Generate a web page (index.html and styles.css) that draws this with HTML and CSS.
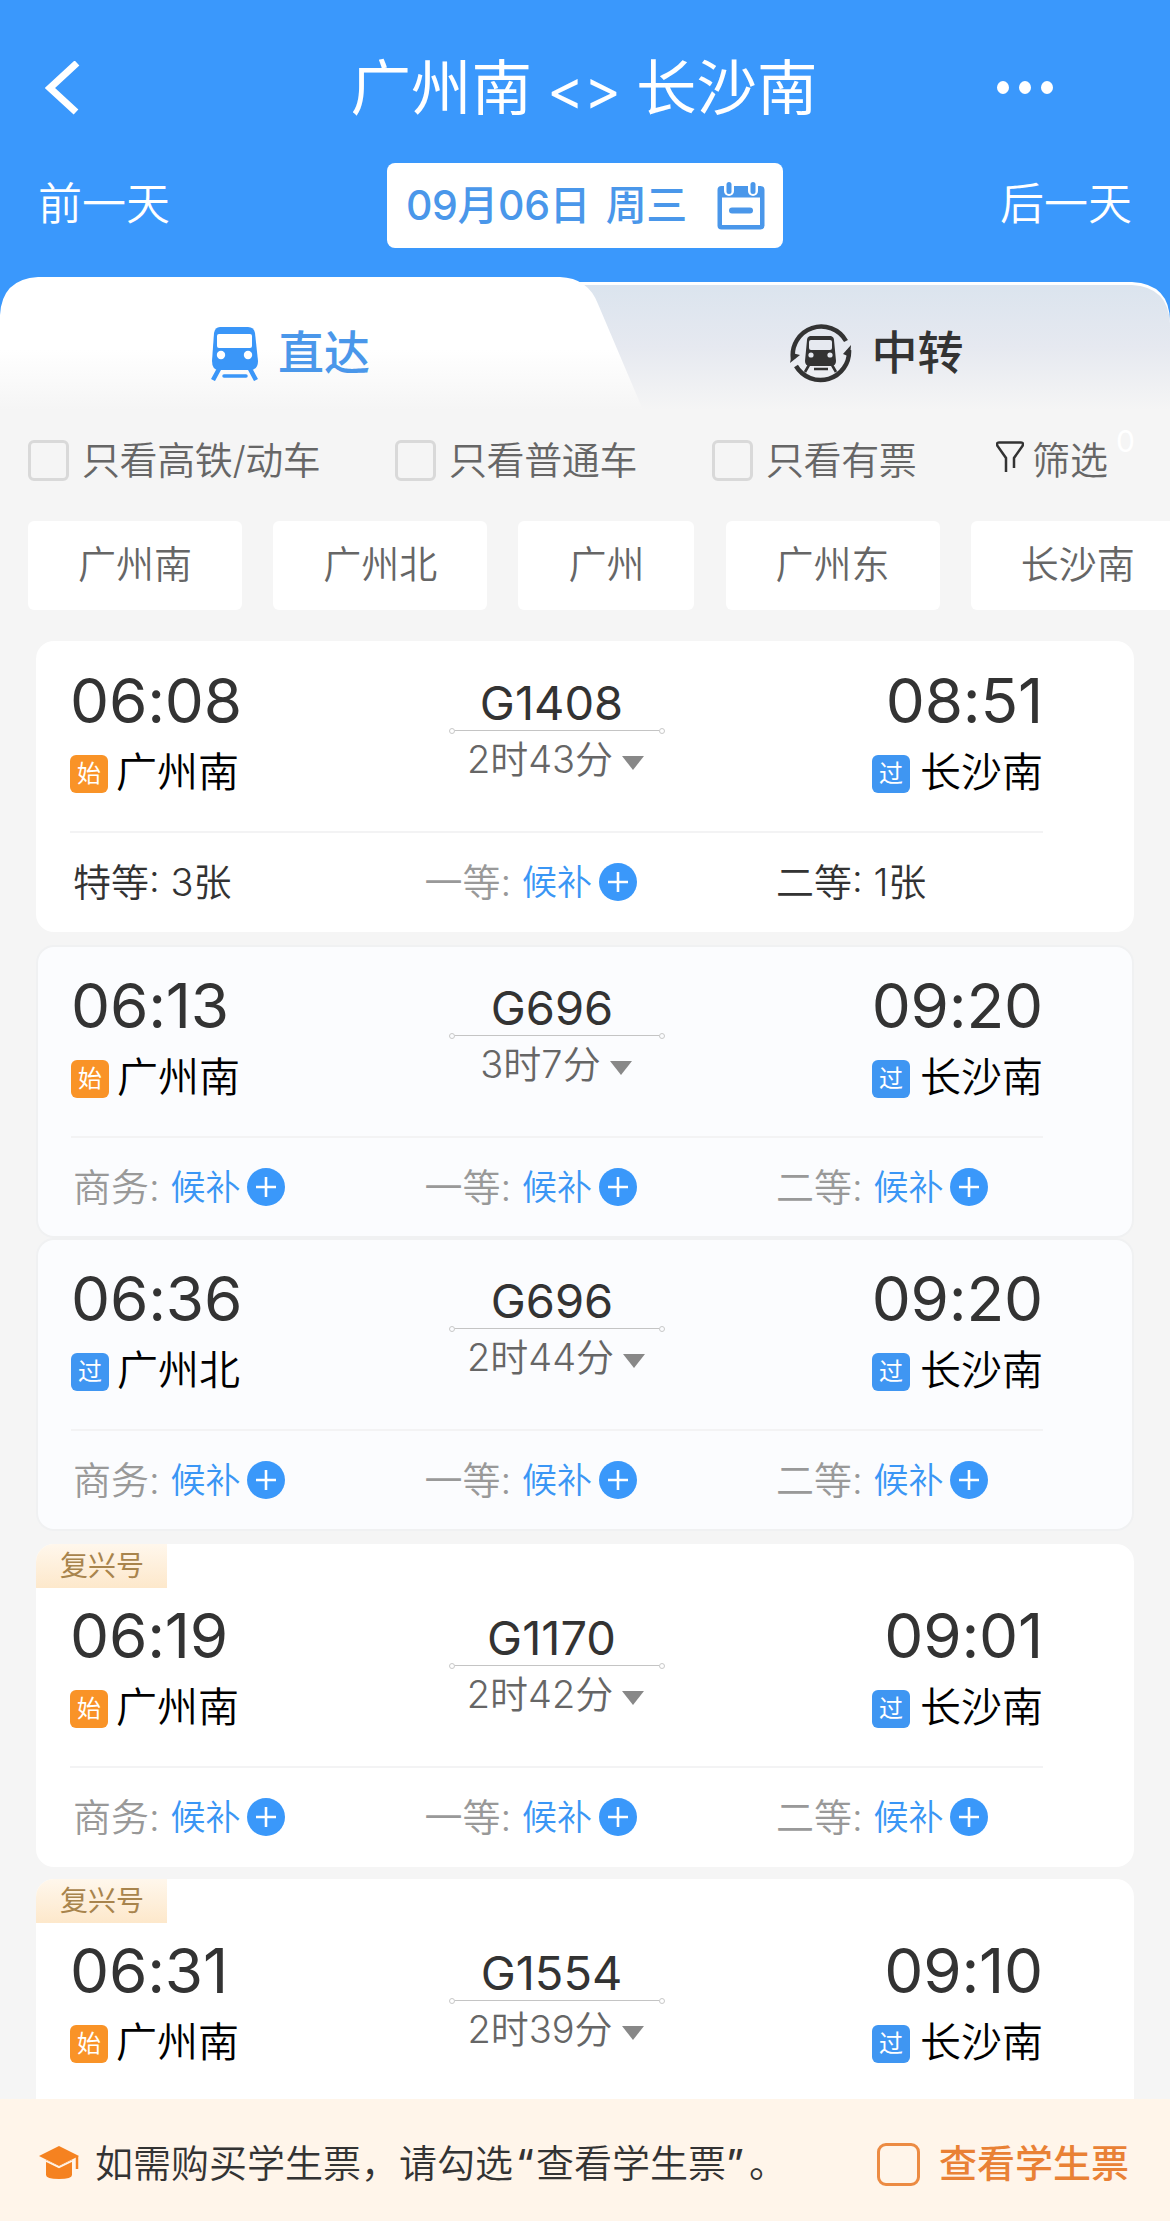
FILE: index.html
```html
<!DOCTYPE html>
<html lang="zh-CN">
<head>
    <meta charset="UTF-8">
    <meta name="viewport" content="width=device-width, initial-scale=1.0">
    <title>广州南 - 长沙南</title>
    <link rel="stylesheet" href="styles.css">
</head>
<body>
    <header class="header">
        <div class="title-bar">
            <svg class="back" viewBox="0 0 36 54"><path d="M32 2L5 27L31 51" fill="none" stroke="#fff" stroke-width="7"/></svg>
            <h1>广州南<span class="swap">&lt;&gt;</span>长沙南</h1>
            <div class="more"><i></i><i></i><i></i></div>
        </div>
        <div class="date-bar">
            <span class="day">前一天</span>
            <div class="date">
                <span class="date-text">09月06日 周三</span>
                <svg class="calendar" viewBox="0 0 48 48">
                    <rect x="0.5" y="4" width="47" height="43.5" rx="4" fill="#4a97ea"/>
                    <rect x="5" y="15.500" width="38" height="27.500" fill="#fff"/>
                    <rect x="7" y="-3" width="10" height="17" rx="5" fill="#fff"/>
                    <rect x="31" y="-3" width="10" height="17" rx="5" fill="#fff"/>
                    <rect x="9.500" y="0" width="5" height="12" rx="2.500" fill="#4a97ea"/>
                    <rect x="33.500" y="0" width="5" height="12" rx="2.500" fill="#4a97ea"/>
                    <rect x="12" y="25.500" width="24" height="6" rx="3" fill="#4a97ea"/>
                </svg>
            </div>
            <span class="day">后一天</span>
        </div>
    </header>

    <nav class="tabs">
        <svg class="tabs-bg" viewBox="0 0 1170 133">
            <defs>
                <linearGradient id="tabOn" x1="0" y1="0" x2="0" y2="1">
                    <stop offset="0.55" stop-color="#fff"/>
                    <stop offset="1" stop-color="#f5f5f5"/>
                </linearGradient>
                <linearGradient id="tabOff" x1="0" y1="0" x2="0" y2="1">
                    <stop offset="0" stop-color="#dbe4ee"/>
                    <stop offset="0.5" stop-color="#e6e9f0"/>
                    <stop offset="1" stop-color="#f5f5f5"/>
                </linearGradient>
            </defs>
            <path d="M500 5H1132Q1170 7 1170 45V133H500Z" fill="#fff"/>
            <path d="M500 8H1132Q1168 10 1170 46V133H500Z" fill="url(#tabOff)"/>
            <path d="M0 133V38Q2 2 38 0H560Q588 1 598 27L643 133Z" fill="url(#tabOn)"/>
        </svg>
        <div class="tab active">
            <svg class="train" viewBox="0 0 48 54">
                <path d="M9 0H37Q43 0 44 6L47 34Q47 43 39 43H8Q1 43 1 34L3 6Q4 0 9 0Z" fill="#3a96f8"/>
                <rect x="6" y="7" width="35" height="14" rx="2" fill="#fff"/>
                <circle cx="10" cy="28" r="4.200" fill="#fff"/>
                <circle cx="37" cy="28" r="4.200" fill="#fff"/>
                <path d="M8 42L2 53M39 42L45 53" stroke="#3a96f8" stroke-width="4.500"/>
                <path d="M13 49H35" stroke="#3a96f8" stroke-width="3.500" stroke-linecap="round"/>
            </svg>
            <span>直达</span>
        </div>
        <div class="tab">
            <svg class="transfer" viewBox="0 0 62 62">
                <path d="M3 36A28.500 28.500 0 0 1 56 18M59 27A28.500 28.500 0 0 1 6 43" fill="none" stroke="#333" stroke-width="4.500"/>
                <path d="M0 40L2 30L10 32Z M53 31L61 22L60 34Z" fill="#333"/>
                <path d="M20 13H41Q44 14 44 17L46 38Q46 43 41 43H20Q15 43 15 38L17 17Q17 14 20 13Z" fill="#333"/>
                <rect x="19" y="17" width="23" height="10" rx="2" fill="#e6e9f0"/>
                <circle cx="21" cy="32" r="2.600" fill="#e6e9f0"/>
                <circle cx="40" cy="32" r="2.600" fill="#e6e9f0"/>
                <path d="M19 42L15 49M42 42L46 49M24 46H38" stroke="#333" stroke-width="2.600"/>
            </svg>
            <span>中转</span>
        </div>
    </nav>

    <div class="filters">
        <label class="check"><i></i>只看高铁/动车</label>
        <label class="check"><i></i>只看普通车</label>
        <label class="check"><i></i>只看有票</label>
        <div class="more-filter">
            <svg class="funnel" viewBox="0 0 28 32"><path d="M10 31V17L1.500 5Q0 1.500 3 1.500H25Q28 1.500 26.500 5L18 17V27" fill="none" stroke="#333" stroke-width="2.500"/></svg>
            <span>筛选</span>
            <sup>0</sup>
        </div>
    </div>

    <div class="stations">
        <span>广州南</span>
        <span>广州北</span>
        <span>广州</span>
        <span>广州东</span>
        <span>长沙南</span>
    </div>

    <main class="list" id="list"></main>

    <footer class="student">
        <svg class="cap" viewBox="0 0 40 34">
            <path d="M7 14V29Q7 33 20 33Q33 33 33 29V14L20 21Z" fill="#f58220"/>
            <path d="M20 0L40 10L20 20L0 10Z" fill="#f58220"/>
            <path d="M7 15L20 21.500L33 15" fill="none" stroke="#fff5ea" stroke-width="1.500"/>
            <path d="M38 10V23" stroke="#f58220" stroke-width="2.500"/>
        </svg>
        <span class="tip">如需购买学生票，请勾选<q>查看学生票</q>。</span>
        <i class="student-box"></i>
        <span class="student-link">查看学生票</span>
    </footer>

    <script>
        const trains = [
            { no: 'G1408', dep: '06:08', arr: '08:51', from: '广州南', start: true, time: '2时43分', seats: [['特等', '3张'], ['一等', ''], ['二等', '1张']] },
            { no: 'G696', dep: '06:13', arr: '09:20', from: '广州南', start: true, time: '3时7分', seats: [['商务', ''], ['一等', ''], ['二等', '']], type: 'soldout' },
            { no: 'G696', dep: '06:36', arr: '09:20', from: '广州北', start: false, time: '2时44分', seats: [['商务', ''], ['一等', ''], ['二等', '']], type: 'soldout joined' },
            { no: 'G1170', dep: '06:19', arr: '09:01', from: '广州南', start: true, time: '2时42分', seats: [['商务', ''], ['一等', ''], ['二等', '']], tag: '复兴号' },
            { no: 'G1554', dep: '06:31', arr: '09:10', from: '广州南', start: true, time: '2时39分', seats: [], tag: '复兴号' }
        ];

        // no count means the class is sold out and only the waitlist is open
        function seat([name, count]) {
            if (count) {
                return `<div class="seat">${name}: ${count}</div>`;
            }
            return `<div class="seat none">${name}: <b>候补</b><svg class="plus" viewBox="0 0 38 38"><circle cx="19" cy="19" r="19" fill="#3a98fa"/><path d="M9 19H29M19 9V29" stroke="#fff" stroke-width="2.600"/></svg></div>`;
        }

        document.getElementById('list').innerHTML = trains.map(t => `
            <section class="card ${t.type || ''} ${t.tag ? 'tagged' : ''}">
                ${t.tag ? `<span class="tag">${t.tag}</span>` : ''}
                <div class="trip">
                    <div class="stop">
                        <div class="clock">${t.dep}</div>
                        <div class="place"><i class="${t.start ? 'start' : 'pass'}">${t.start ? '始' : '过'}</i>${t.from}</div>
                    </div>
                    <div class="train-info">
                        <div class="train-no">${t.no}</div>
                        <div class="line"><i></i><hr><i></i></div>
                        <div class="duration">${t.time}<i></i></div>
                    </div>
                    <div class="stop end">
                        <div class="clock">${t.arr}</div>
                        <div class="place"><i class="pass">过</i>长沙南</div>
                    </div>
                </div>
                <div class="seats">${t.seats.map(seat).join('')}</div>
            </section>`).join('');
    </script>
</body>
</html>
```
FILE: styles.css
```css
* {
    box-sizing: border-box;
}
body {
    margin: 0;
    width: 1170px;
    height: 2221px;
    overflow: hidden;
    display: flex;
    flex-direction: column;
    background-color: #f5f5f5;
    font-family: Inter, "Noto Sans CJK SC", sans-serif;
    color: #333;
}
i {
    font-style: normal;
}
svg {
    display: block;
    flex: none;
}
.header {
    height: 277px;
    flex: none;
    background-color: #3a98fc;
    color: #fff;
}
.title-bar {
    display: flex;
    align-items: center;
    justify-content: space-between;
    height: 163px;
    padding: 12px 117px 0 45px;
}
.back {
    width: 36px;
    height: 54px;
}
h1 {
    margin: 3px 0 0 90px;
    font-size: 60.500px;
    font-weight: 400;
    line-height: 80px;
    white-space: nowrap;
}
.swap {
    margin: 0 15px;
    font-size: 56px;
}
.more {
    display: flex;
    gap: 10px;
}
.more i {
    width: 12px;
    height: 13px;
    border-radius: 50%;
    background-color: #fff;
}
.date-bar {
    display: flex;
    align-items: center;
    justify-content: space-between;
    height: 85px;
    padding: 0 38px 0 38px;
}
.day {
    padding-bottom: 3px;
    font-size: 44px;
    font-weight: 350;
    line-height: 60px;
}
.date {
    display: flex;
    align-items: center;
    justify-content: space-between;
    width: 396px;
    height: 85px;
    padding: 0 18px 0 19px;
    border-radius: 8px;
    background-color: #fff;
    color: #4a97ea;
    font-size: 41px;
    font-weight: 500;
    white-space: nowrap;
}
.date-text {
    padding-bottom: 7px;
    letter-spacing: -0.4px;
    word-spacing: 5px;
}
.calendar {
    width: 48px;
    height: 48px;
}
.tabs {
    position: relative;
    display: flex;
    flex: none;
    height: 133px;
    background: linear-gradient(#3a98fc 50%, #f5f5f5 50%);
}
.tabs-bg {
    position: absolute;
    left: 0;
    top: 0;
    width: 1170px;
    height: 133px;
}
.tab {
    position: relative;
    display: flex;
    align-items: center;
    justify-content: center;
    width: 585px;
    height: 150px;
    padding-right: 2px;
    font-size: 46px;
    font-weight: 500;
    gap: 20px;
}
.tab span {
    padding-bottom: 6px;
}
.tab.active {
    padding-right: 4px;
    color: #4a97ea;
    gap: 19px;
}
.train {
    width: 48px;
    height: 54px;
    margin-top: 4px;
}
.transfer {
    width: 62px;
    height: 62px;
    margin-top: 3px;
}
.filters {
    display: flex;
    align-items: center;
    flex: none;
    height: 102px;
    padding: 0 0 8px 28px;
    font-size: 38px;
    font-weight: 350;
    color: #666;
}
.check {
    display: flex;
    align-items: center;
    gap: 13px;
    letter-spacing: -0.4px;
    white-space: nowrap;
}
.check i {
    width: 41px;
    height: 41px;
    margin-top: 6px;
    border: 3px solid #d9d9d9;
    border-radius: 6px;
}
.check:nth-child(1) {
    width: 367px;
}
.check:nth-child(2) {
    width: 317px;
}
.check:nth-child(3) {
    width: 284px;
}
.more-filter {
    display: flex;
    align-items: center;
    gap: 8px;
}
.funnel {
    width: 28px;
    height: 32px;
}
.more-filter sup {
    margin-bottom: 32px;
    font-size: 30px;
    line-height: 30px;
    color: #fff;
    font-weight: 400;
}
.stations {
    display: flex;
    flex: none;
    gap: 31.2px;
    height: 129px;
    padding: 9px 0 31px 28px;
}
.stations span {
    flex: none;
    padding: 0 50px;
    border-radius: 6px;
    background-color: #fff;
    color: #666;
    font-size: 38px;
    font-weight: 350;
    line-height: 87px;
}
.list {
    flex: 1;
    min-height: 0;
    overflow: hidden;
    padding: 0 36px;
}
.card {
    height: 291px;
    margin-bottom: 13px;
    border-radius: 18px;
    background-color: #fff;
    overflow: hidden;
}
.card.soldout {
    border: 2px solid #f0f1f2;
    background-color: #fbfcfe;
    height: 293px;
    margin-bottom: 0;
}
.card.joined {
    margin-bottom: 13px;
}
.card.tagged {
    height: 323px;
    margin-bottom: 12px;
}
.tag {
    display: block;
    width: 131px;
    height: 44px;
    margin-bottom: -12px;
    padding-left: 24px;
    background: linear-gradient(#fff7ec, #fde8cb);
    color: #a8844c;
    font-size: 28px;
    line-height: 44px;
}
.trip {
    display: flex;
    justify-content: space-between;
    height: 192px;
    margin: 0 91px 0 34px;
    padding-top: 25px;
    border-bottom: 2px solid #f3f3f4;
}
.soldout .trip {
    height: 191px;
    margin: 0 89px 0 33px;
    padding-top: 24px;
}
.stop {
    width: 300px;
}
.stop.end {
    text-align: right;
}
.clock {
    font-size: 62px;
    line-height: 70px;
    letter-spacing: -0.2px;
}
.place {
    display: flex;
    align-items: center;
    gap: 8px;
    height: 44px;
    margin-top: 11px;
    color: #000;
    font-size: 41px;
    font-weight: 350;
}
.end .place {
    justify-content: flex-end;
    gap: 10px;
}
.place i {
    width: 38px;
    height: 38px;
    margin-top: 10px;
    border-radius: 6px;
    color: #fff;
    font-size: 24px;
    font-weight: 400;
    line-height: 38px;
    text-align: center;
}
.start {
    background-color: #f99327;
}
.pass {
    background-color: #3f96f2;
}
.train-info {
    width: 216px;
    padding-top: 12px;
    text-align: center;
}
.train-no {
    margin-right: 10px;
    font-size: 47px;
    line-height: 50px;
}
.line {
    display: flex;
    align-items: center;
    height: 5px;
}
.line i {
    width: 6px;
    height: 6px;
    border: 1px solid #c8c8c8;
    border-radius: 50%;
}
.line hr {
    flex: 1;
    margin: 0;
    border: 0;
    border-top: 1px solid #c4c4c4;
}
.duration {
    display: flex;
    align-items: center;
    justify-content: center;
    gap: 9px;
    height: 50px;
    margin-top: -2px;
    padding-right: 2px;
    color: #666;
    font-size: 38px;
    font-weight: 350;
}
.duration i {
    margin-top: 14px;
    border: 11px solid transparent;
    border-top: 14px solid #888;
    border-bottom: 0;
}
.seats {
    display: flex;
    height: 99px;
    padding: 0 0 6px 37px;
}
.soldout .seats {
    padding-left: 35px;
}
.seat {
    display: flex;
    align-items: center;
    width: 351.500px;
    font-size: 38px;
    font-weight: 350;
    white-space: pre;
}
.seat.none {
    color: #999;
}
.seat b {
    color: #3a96f5;
    font-size: 35px;
    font-weight: 350;
}
.plus {
    width: 38px;
    height: 38px;
    margin: 4px 0 0 7px;
}
.student {
    display: flex;
    align-items: center;
    flex: none;
    height: 122px;
    padding: 4px 41px 0 39px;
    background-color: #fff5ea;
    font-size: 38px;
    white-space: nowrap;
}
.cap {
    width: 40px;
    height: 36px;
    margin-top: 2px;
}
.tip {
    margin-left: 16px;
    padding-bottom: 4px;
    font-weight: 350;
}
.tip q {
    quotes: "“" "”";
}
.tip q::before {
    padding: 0 2px 0 3px;
    font-weight: 500;
}
.tip q::after {
    padding-right: 5px;
    font-weight: 500;
}
.student-box {
    width: 43px;
    height: 43px;
    margin: 4px 0 0 auto;
    border: 3px solid #ec8b43;
    border-radius: 9px;
}
.student-link {
    margin-left: 19px;
    padding-bottom: 4px;
    color: #e98135;
    font-weight: 500;
}
```
